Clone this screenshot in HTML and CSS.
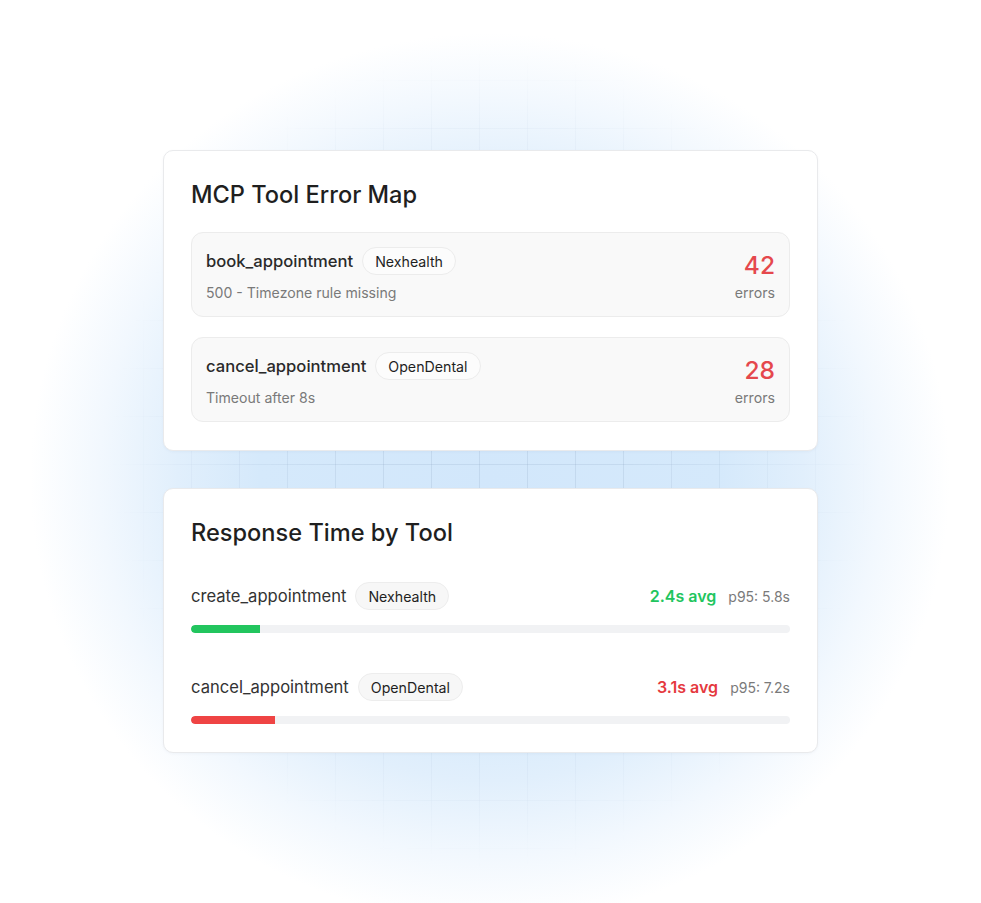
FILE: index.html
```html
<!DOCTYPE html>
<html lang="en">
<head>
<meta charset="utf-8">
<title>MCP Tool Monitoring</title>
<link rel="stylesheet" href="styles.css">
</head>
<body>
<main class="stage">
  <section class="card">
    <h2 class="card-title">MCP Tool Error Map</h2>
    <div class="error-list">
      <div class="error-item">
        <div class="error-info">
          <div class="tool-line">
            <span class="tool-name">book_appointment</span>
            <span class="badge">Nexhealth</span>
          </div>
          <div class="error-detail">500 - Timezone rule missing</div>
        </div>
        <div class="error-count">
          <span class="count">42</span>
          <span class="count-label">errors</span>
        </div>
      </div>
      <div class="error-item">
        <div class="error-info">
          <div class="tool-line">
            <span class="tool-name">cancel_appointment</span>
            <span class="badge">OpenDental</span>
          </div>
          <div class="error-detail">Timeout after 8s</div>
        </div>
        <div class="error-count">
          <span class="count">28</span>
          <span class="count-label">errors</span>
        </div>
      </div>
    </div>
  </section>

  <section class="card">
    <h2 class="card-title">Response Time by Tool</h2>
    <div class="timing-list">
      <div class="timing-row">
        <div class="timing-head">
          <div class="tool-line">
            <span class="timing-name">create_appointment</span>
            <span class="badge badge-plain">Nexhealth</span>
          </div>
          <div class="timing-stats">
            <span class="avg avg-good">2.4s avg</span>
            <span class="p95">p95: 5.8s</span>
          </div>
        </div>
        <div class="track"><div class="fill fill-good" style="width: 11.6%"></div></div>
      </div>
      <div class="timing-row">
        <div class="timing-head">
          <div class="tool-line">
            <span class="timing-name">cancel_appointment</span>
            <span class="badge badge-plain">OpenDental</span>
          </div>
          <div class="timing-stats">
            <span class="avg avg-bad">3.1s avg</span>
            <span class="p95">p95: 7.2s</span>
          </div>
        </div>
        <div class="track"><div class="fill fill-bad" style="width: 14.1%"></div></div>
      </div>
    </div>
  </section>
</main>
</body>
</html>
```

FILE: styles.css
```css
* {
  box-sizing: border-box;
}

html,
body {
  margin: 0;
  padding: 0;
  background: #ffffff;
}

body {
  font-family: Inter, "Noto Sans", "Liberation Sans", sans-serif;
  color: #222222;
  width: 981px;
  height: 903px;
  overflow: hidden;
}

/* Canvas with a soft blue glow and a faint grid behind the cards */
.stage {
  position: relative;
  width: 981px;
  height: 903px;
  padding-top: 150px;
  display: flex;
  flex-direction: column;
  align-items: center;
  gap: 37px;
  background:
    radial-gradient(ellipse 460px 445px at 490px 478px,
      #d2e7fb 0%,
      #d5e9fb 50%,
      #e1effc 68%,
      #f2f8fe 85%,
      rgba(255, 255, 255, 0) 100%),
    #ffffff;
}

.stage::before {
  content: "";
  position: absolute;
  inset: 0;
  background-image:
    linear-gradient(to right, rgba(110, 135, 170, 0.15) 1px, transparent 1px),
    linear-gradient(to bottom, rgba(110, 135, 170, 0.15) 1px, transparent 1px);
  background-size: 48px 48px;
  background-position: 47px 32px;
  -webkit-mask-image: radial-gradient(ellipse 380px 410px at 490px 460px, #000 35%, rgba(0, 0, 0, 0.45) 70%, transparent 100%);
  mask-image: radial-gradient(ellipse 380px 410px at 490px 460px, #000 35%, rgba(0, 0, 0, 0.45) 70%, transparent 100%);
  pointer-events: none;
}

.card {
  position: relative;
  z-index: 1;
  width: 655px;
  background: #ffffff;
  border: 1px solid #e9eaec;
  border-radius: 10px;
  padding: 27px 27px 28px;
  box-shadow: 0 1px 3px rgba(30, 60, 100, 0.04);
}

.card-title {
  margin: 0;
  font-size: 23.6px;
  line-height: 34px;
  font-weight: 500;
  color: #1f1f1f;
}

/* Error map */
.error-list {
  margin-top: 20px;
  display: flex;
  flex-direction: column;
  gap: 20px;
}

.error-item {
  display: flex;
  justify-content: space-between;
  align-items: stretch;
  height: 85px;
  padding: 14px;
  background: #f9f9f9;
  border: 1px solid #ececec;
  border-radius: 12px;
}

.error-info {
  display: flex;
  flex-direction: column;
}

.tool-line {
  display: flex;
  align-items: center;
  gap: 9px;
  height: 28px;
}

.tool-name {
  font-size: 16.6px;
  font-weight: 500;
  color: #2a2a2a;
}

.badge {
  display: inline-flex;
  align-items: center;
  height: 28px;
  padding: 0 12px;
  border-radius: 14px;
  font-size: 14.2px;
  color: #1f1f1f;
  background: #fcfcfc;
  border: 1px solid #ececec;
}

.badge-plain {
  background: #f7f7f7;
  border-color: #ededed;
}

.error-detail {
  margin-top: 8px;
  font-size: 14.1px;
  line-height: 20px;
  color: #7a7a7a;
}

.error-count {
  display: flex;
  flex-direction: column;
  align-items: flex-end;
  justify-content: center;
  padding-top: 3px;
}

.count {
  font-size: 24.5px;
  line-height: 30px;
  font-weight: 500;
  color: #e5484d;
}

.count-label {
  margin-top: 3px;
  font-size: 14.2px;
  line-height: 20px;
  color: #7a7a7a;
}

/* Response times */
.timing-list {
  margin-top: 32px;
  display: flex;
  flex-direction: column;
  gap: 40px;
}

.timing-head {
  display: flex;
  justify-content: space-between;
  align-items: center;
  height: 28px;
}

.timing-name {
  font-size: 16.6px;
  color: #333333;
}

.timing-stats {
  display: flex;
  align-items: baseline;
  gap: 12px;
}

.avg {
  font-size: 16px;
  font-weight: 600;
}

.avg-good {
  color: #22c55e;
}

.avg-bad {
  color: #e5393e;
}

.p95 {
  font-size: 14px;
  color: #7a7a7a;
}

.track {
  margin-top: 15px;
  height: 8px;
  border-radius: 4px;
  background: #f1f2f4;
  overflow: hidden;
}

.fill {
  height: 100%;
  border-radius: 4px 0 0 4px;
}

.fill-good {
  background: #22c55e;
}

.fill-bad {
  background: #ef4444;
}
```
